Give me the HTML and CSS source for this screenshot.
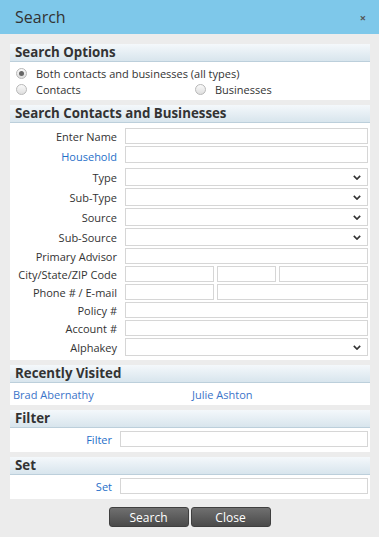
FILE: index.html
```html
<!DOCTYPE html>
<html lang="en">
<head>
  <meta charset="UTF-8" />
  <meta name="viewport" content="width=device-width, initial-scale=1.0" />
  <title>Search</title>
  <link rel="stylesheet" href="styles.css">
</head>
<body>
  <div class="dialog">
    <div class="titlebar">
      <span class="title">Search</span>
      <span class="close">&times;</span>
    </div>

    <div class="content">
      <section class="panel">
        <h2>Search Options</h2>
        <div class="panel-body options">
          <label class="radio wide"><span class="dot checked"></span>Both contacts and businesses (all types)</label>
          <label class="radio"><span class="dot"></span>Contacts</label>
          <label class="radio"><span class="dot"></span>Businesses</label>
        </div>
      </section>

      <section class="panel">
        <h2>Search Contacts and Businesses</h2>
        <div class="panel-body fields">
          <label>Enter Name</label>
          <input type="text" />
          <label class="link">Household</label>
          <input type="text" class="household" />
          <label>Type</label>
          <div class="select"><select></select><svg viewBox="0 0 10 6"><path d="M1 1l4 4 4-4" /></svg></div>
          <label>Sub-Type</label>
          <div class="select"><select></select><svg viewBox="0 0 10 6"><path d="M1 1l4 4 4-4" /></svg></div>
          <label>Source</label>
          <div class="select"><select></select><svg viewBox="0 0 10 6"><path d="M1 1l4 4 4-4" /></svg></div>
          <label>Sub-Source</label>
          <div class="select"><select></select><svg viewBox="0 0 10 6"><path d="M1 1l4 4 4-4" /></svg></div>
          <label>Primary Advisor</label>
          <input type="text" />
          <label>City/State/ZIP Code</label>
          <div class="split city"><input type="text" /><input type="text" /><input type="text" /></div>
          <label>Phone # / E-mail</label>
          <div class="split phone"><input type="text" /><input type="text" /></div>
          <label>Policy #</label>
          <input type="text" />
          <label>Account #</label>
          <input type="text" />
          <label>Alphakey</label>
          <div class="select"><select></select><svg viewBox="0 0 10 6"><path d="M1 1l4 4 4-4" /></svg></div>
        </div>
      </section>

      <section class="panel">
        <h2>Recently Visited</h2>
        <div class="panel-body recent">
          <a href="#">Brad Abernathy</a>
          <a href="#">Julie Ashton</a>
        </div>
      </section>

      <section class="panel">
        <h2>Filter</h2>
        <div class="panel-body single">
          <label class="link">Filter</label>
          <input type="text" />
        </div>
      </section>

      <section class="panel">
        <h2>Set</h2>
        <div class="panel-body single">
          <label class="link">Set</label>
          <input type="text" />
        </div>
      </section>

      <div class="actions">
        <button type="button">Search</button>
        <button type="button">Close</button>
      </div>
    </div>
  </div>
</body>
</html>
```

FILE: styles.css
```css
body {
  margin: 0;
  font-family: 'Open Sans', sans-serif;
  font-size: 11px;
  color: #333;
  background: #ebebeb;
}
.dialog {
  width: 379px;
  height: 537px;
  background: #ececec;
}
.titlebar {
  height: 34px;
  background: #7ec8ea;
  display: flex;
  align-items: center;
  justify-content: space-between;
  padding: 0 13px 0 15px;
}
.title {
  font-size: 16px;
  color: #333;
}
.close {
  font-size: 11px;
  color: #555;
  font-weight: bold;
}
.content {
  padding: 10px 9px 0 10px;
}
.panel {
  background: white;
  margin-bottom: 5px;
}
.panel h2 {
  margin: 0;
  height: 17px;
  line-height: 17px;
  padding-left: 5px;
  font-size: 13.3px;
  font-weight: bold;
  color: #333;
  background: linear-gradient(#f4f8fb, #d8e5ed);
  border-bottom: 1px solid #bccfdb;
}
.panel-body {
  padding: 3px 2px 3px 3px;
}
.options {
  display: grid;
  grid-template-columns: 179px 1fr;
}
.radio {
  display: flex;
  align-items: center;
  height: 16px;
}
.radio.wide {
  grid-column: 1 / 3;
}
.dot {
  width: 9px;
  height: 9px;
  border: 1px solid #b8b8b8;
  border-radius: 50%;
  background: linear-gradient(#fafafa, #dedede);
  margin: 0 9px 0 3px;
  position: relative;
}
.dot.checked::after {
  content: '';
  position: absolute;
  left: 2px;
  top: 2px;
  width: 5px;
  height: 5px;
  border-radius: 50%;
  background: #666;
}
.fields {
  display: grid;
  grid-template-columns: 104px 1fr;
  column-gap: 8px;
  row-gap: 2px;
  padding-top: 5px;
  padding-bottom: 4px;
}
.fields label,
.single label {
  text-align: right;
  align-self: center;
  white-space: nowrap;
}
.link {
  color: #1f6fc9;
}
input,
select {
  box-sizing: border-box;
  height: 16px;
  width: 100%;
  margin: 0;
  border: 1px solid #d6d6d6;
  background: white;
  font-family: inherit;
  font-size: 11px;
}
.household {
  height: 17px;
  margin-bottom: 3px;
}
.select {
  position: relative;
}
.select select {
  height: 18px;
  appearance: none;
  -webkit-appearance: none;
  border-radius: 0;
  display: block;
}
.select svg {
  position: absolute;
  right: 7px;
  top: 7px;
  width: 8px;
  height: 5px;
  fill: none;
  stroke: #333;
  stroke-width: 2;
}
.split {
  display: grid;
  gap: 3px;
}
.city {
  grid-template-columns: 89px 59px 1fr;
}
.phone {
  grid-template-columns: 89px 1fr;
}
.recent {
  display: grid;
  grid-template-columns: 179px 1fr;
  height: 22px;
  padding: 0 0 0 3px;
  align-items: center;
  box-sizing: border-box;
}
.recent a {
  color: #3b74c9;
  text-decoration: none;
}
.single {
  display: grid;
  grid-template-columns: 102px 1fr;
  column-gap: 8px;
  padding: 3px 2px 5px 0;
}
.actions {
  display: flex;
  justify-content: center;
  gap: 2px;
  padding-top: 3px;
  padding-right: 1px;
}
button {
  width: 80px;
  height: 20px;
  border: 1px solid #3f3f3f;
  border-radius: 3px;
  background: linear-gradient(#707070, #4a4a4a);
  color: white;
  font-family: 'Open Sans', sans-serif;
  font-size: 12px;
  padding: 0;
}
```
